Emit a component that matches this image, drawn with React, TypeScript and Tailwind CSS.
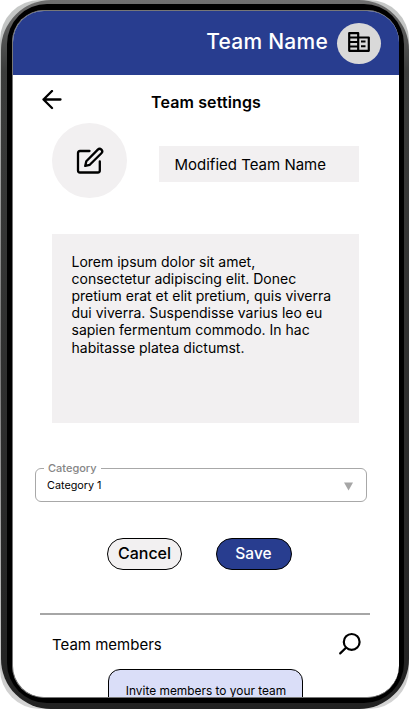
import type { ReactNode } from "react";

function BackIcon() {
  return (
    <svg width="20" height="20" viewBox="0 0 20 20" fill="none" stroke="#000" strokeWidth="2.300" strokeLinecap="round" strokeLinejoin="round">
      <path d="M18.500 9.500H1.500M10 1L1.500 9.500L10 18" />
    </svg>
  );
}

function BuildingIcon() {
  return (
    <svg width="22" height="20" viewBox="0 0 22 20" fill="none" stroke="#000" strokeWidth="2.200">
      <path d="M10.200 5.500V1.200H1.200V18.800H20.800V5.500H10.200V18.800" strokeLinejoin="round" />
      <path d="M1 5.600H10M1 10H10M1 14.400H10" strokeWidth="2" />
      <path d="M13 9.600H17.500M13 14.200H17.500" strokeWidth="2" />
    </svg>
  );
}

function EditIcon() {
  return (
    <svg width="28" height="28" viewBox="0 0 28 28" fill="none" stroke="#000" strokeWidth="2.300" strokeLinecap="round" strokeLinejoin="round">
      <path d="M13.500 4H4Q2 4 2 6V23.500Q2 25.500 4 25.500H21.800Q23.800 25.500 23.800 23.500V14.500" />
      <path d="M21.800 2.600a2.500 2.500 0 0 1 3.600 3.600L13.800 17.800L9.200 18.900L10.300 14.200Z" />
    </svg>
  );
}

function SearchIcon() {
  return (
    <svg width="24" height="24" viewBox="0 0 24 24" fill="none" stroke="#000" strokeWidth="2.200" strokeLinecap="round">
      <circle cx="13.700" cy="9.900" r="7.900" />
      <path d="M8 15.800L2.200 21.400" />
    </svg>
  );
}

function PhoneFrame({ children }: { children: ReactNode }) {
  return (
    <div className="h-[709px] w-[409px] overflow-hidden bg-white font-['Inter',sans-serif] text-black">
      <div className="h-full rounded-[40px] bg-gradient-to-b from-[#c8cac9] via-[#777] to-[#d5d5d5] pl-px">
        <div className="h-full rounded-[50px] bg-gradient-to-b from-[#707070] via-[#3c3d3c] via-10% to-[#222] pt-[4px] pr-[5px] pb-[6px] pl-[6px]">
          <div className="h-full rounded-[40px] bg-black pt-[6px] pr-[5px] pb-[5px] pl-[5px]">
            <div className="h-full overflow-hidden rounded-[32px] border-t border-l border-b border-[#777] bg-white">
              {children}
            </div>
          </div>
        </div>
      </div>
    </div>
  );
}

export default function App() {
  return (
    <PhoneFrame>
      <header className="flex h-16 items-center justify-end bg-[#283d8f] pr-[18px]">
        <h1 className="mr-[9px] pb-[2px] text-[21px] leading-6 font-medium tracking-[0.25px] whitespace-nowrap text-white">Team Name</h1>
        <div className="flex h-[41px] w-11 items-center justify-center rounded-[50%] bg-[#d9d9d9] pb-[2px] pr-px">
          <BuildingIcon />
        </div>
      </header>

      <div className="flex h-[48px] pt-[15px] pl-[29px]">
        <button className="h-5 w-5"><BackIcon /></button>
        <h2 className="mt-[2px] ml-[89px] text-[16px] leading-5 font-semibold tracking-[0.12px] whitespace-nowrap">Team settings</h2>
      </div>

      <div className="flex items-start pl-[39px]">
        <div className="flex h-[75px] w-[75px] items-center justify-center rounded-full bg-[#f2f0f1]">
          <EditIcon />
        </div>
        <div className="mt-[23px] ml-8 flex h-9 w-[200px] items-center bg-[#f2f0f1] pt-[2px] pl-[15.500px] text-[15px] leading-5 whitespace-nowrap">
          Modified Team Name
        </div>
      </div>

      <div className="mt-9 ml-[39px] h-[189px] w-[307px] bg-[#f2f0f1] pt-[18.500px] pl-[19.500px] text-[14px] leading-[17.200px] whitespace-nowrap">
        Lorem ipsum dolor sit amet,<br />
        consectetur adipiscing elit. Donec<br />
        pretium erat et elit pretium, quis viverra<br />
        dui viverra. Suspendisse varius leo eu<br />
        sapien fermentum commodo. In hac<br />
        habitasse platea dictumst.
      </div>

      <fieldset className="mt-[38px] ml-[22px] h-[41px] w-[332px] rounded-[6px] border border-[#a8a8a8] pl-[8px]">
        <legend className="h-[14px] px-[4px] text-[11px] leading-[14px] font-medium text-[#858585]">Category</legend>
        <div className="flex items-center justify-between pt-[4px] pr-[13px] pl-[3px]">
          <span className="text-[10.800px] leading-[14px]">Category 1</span>
          <svg width="9" height="9" viewBox="0 0 9 9" fill="#a6a6a6"><path d="M0 0.500H9L4.500 8.500Z" /></svg>
        </div>
      </fieldset>

      <div className="mt-9 ml-[94px] flex gap-[34px]">
        <button className="flex h-8 w-[75px] items-center justify-center rounded-full border border-black bg-[#f2f0f1] pb-[3px] text-[16px] font-medium">Cancel</button>
        <button className="flex h-8 w-[76px] items-center justify-center rounded-full border border-black bg-[#283d8f] pr-[1px] text-[15.500px] font-medium text-white">Save</button>
      </div>

      <div className="mt-[43px] ml-[27px] h-[2px] w-[330px] bg-[#a6a6a6]" />

      <div className="flex h-[54px] items-start justify-between pt-[17px] pr-[37px] pl-[39px]">
        <span className="mt-[3px] text-[15px] leading-5">Team members</span>
        <SearchIcon />
      </div>
      <button className="ml-[95px] flex h-11 w-[195px] items-center justify-center rounded-[12px] border border-black bg-[#dadef8] pl-px text-[11.900px] whitespace-nowrap">
        Invite members to your team
      </button>
    </PhoneFrame>
  );
}
